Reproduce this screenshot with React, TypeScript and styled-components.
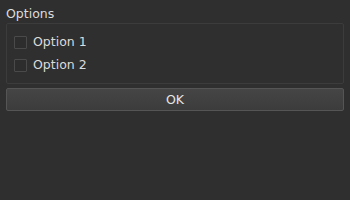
import React, { useState } from 'react';
import styled, { createGlobalStyle } from 'styled-components';

const GlobalStyle = createGlobalStyle`
  html, body {
    margin: 0;
    padding: 0;
    background: #2f2f2f;
  }
  body {
    font-family: 'DejaVu Sans', 'Noto Sans', sans-serif;
    font-size: 12px;
    color: #dcdcdc;
  }
`;

const SPage = styled.div`
  width: 350px;
  height: 200px;
  box-sizing: border-box;
  padding: 4px 6px 0 6px;
  display: flex;
  flex-direction: column;
`;

const SGroupTitle = styled.div`
  height: 19px;
  line-height: 19px;
  font-size: 12.5px;
`;

const SGroupBox = styled.div`
  box-sizing: border-box;
  height: 61px;
  border: 1px solid #3c3c3c;
  border-radius: 2px;
  padding: 11px 7px 0 7px;
  display: flex;
  flex-direction: column;
  gap: 9px;
`;

const SCheckRow = styled.label`
  display: flex;
  align-items: center;
  gap: 6px;
  height: 14px;
  cursor: default;
`;

const SBox = styled.span<{ $checked: boolean }>`
  box-sizing: border-box;
  width: 13px;
  height: 13px;
  border: 1px solid #4a4a4a;
  border-radius: 1px;
  background: #2d2d2d;
  display: flex;
  align-items: center;
  justify-content: center;
  color: #dcdcdc;
  font-size: 10px;
`;

const SCheckText = styled.span`
  font-size: 12.5px;
  line-height: 14px;
`;

const SButton = styled.button`
  margin-top: 4px;
  box-sizing: border-box;
  height: 23px;
  width: 338px;
  border: 1px solid #555555;
  border-radius: 2px;
  background: linear-gradient(#454545, #3c3c3c);
  color: #e6e6e6;
  font-family: 'DejaVu Sans', sans-serif;
  font-size: 12.5px;
  padding: 0;
`;

export default function App() {
  const [checked, setChecked] = useState([false, false]);
  const toggle = (i: number) =>
    setChecked((c) => c.map((v, j) => (j === i ? !v : v)));

  return (
    <>
      <GlobalStyle />
      <SPage>
        <SGroupTitle>Options</SGroupTitle>
        <SGroupBox>
          {['Option 1', 'Option 2'].map((label, i) => (
            <SCheckRow key={label} onClick={() => toggle(i)}>
              <SBox $checked={checked[i]}>{checked[i] ? '✓' : ''}</SBox>
              <SCheckText>{label}</SCheckText>
            </SCheckRow>
          ))}
        </SGroupBox>
        <SButton>OK</SButton>
      </SPage>
    </>
  );
}
